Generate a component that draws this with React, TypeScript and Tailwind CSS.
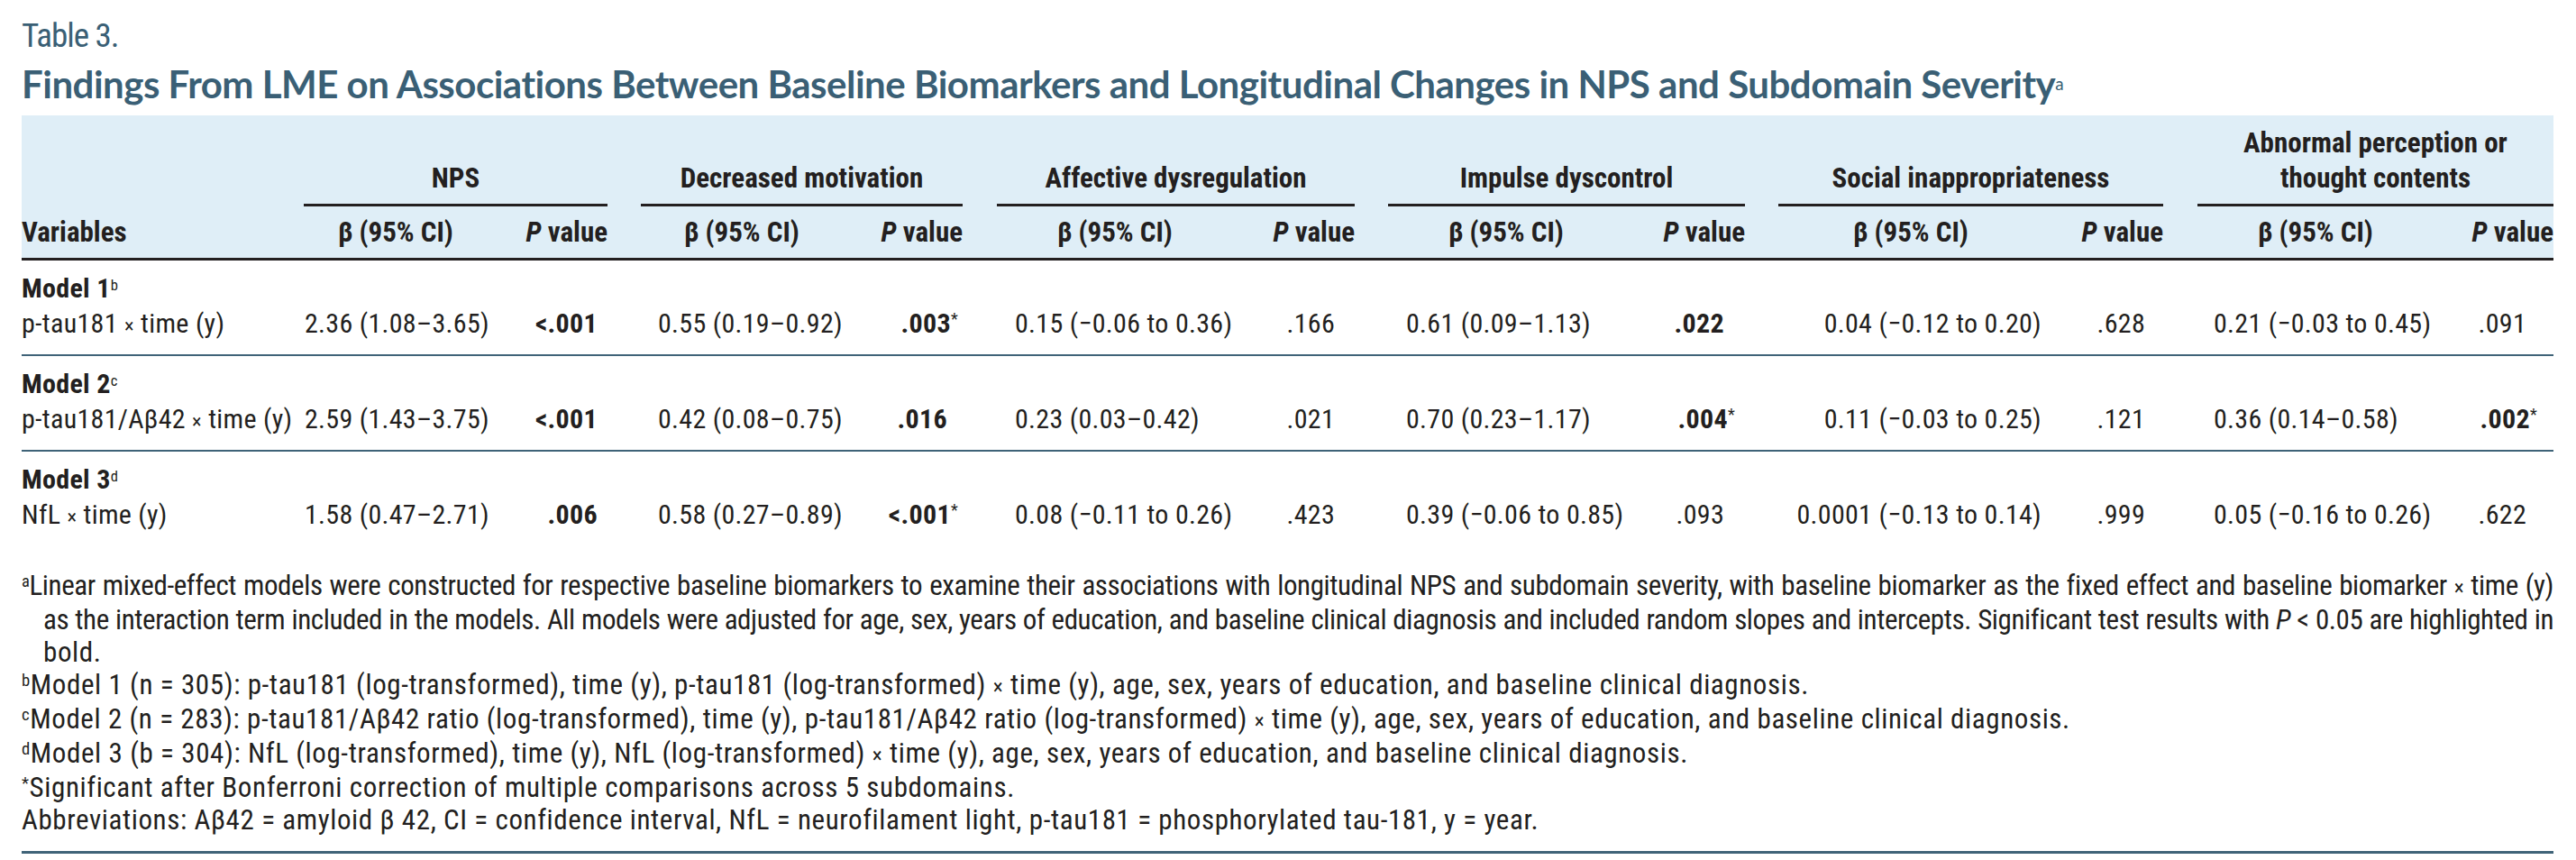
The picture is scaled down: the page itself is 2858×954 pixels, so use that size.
import React from "react";

const cond =
  "font-['Roboto_Condensed','Liberation_Sans_Narrow','DejaVu_Sans_Condensed','Noto_Sans',sans-serif] font-stretch-condensed";

type Group = {
  name: React.ReactNode;
  w: string;
  ml: string;
  bh: string;
  bd: string;
  pd: string;
};

const groups: Group[] = [
  { name: "NPS", w: "w-[337px]", ml: "", bh: "pl-[38px]", bd: "pl-[1px]", pd: "pr-[11px]" },
  { name: "Decreased motivation", w: "w-[357px]", ml: "ml-[37px]", bh: "pl-[48px]", bd: "pl-[19px]", pd: "pr-[17px]" },
  { name: "Affective dysregulation", w: "w-[397px]", ml: "ml-[38px]", bh: "pl-[67px]", bd: "pl-[20px]", pd: "pr-[22px]" },
  { name: "Impulse dyscontrol", w: "w-[396px]", ml: "ml-[37px]", bh: "pl-[67px]", bd: "pl-[20px]", pd: "pr-[23px]" },
  { name: "Social inappropriateness", w: "w-[427px]", ml: "ml-[37px]", bh: "pl-[83px]", bd: "text-right pr-[41px]", pd: "pr-[20px]" },
  {
    name: (
      <>
        Abnormal perception or
        <br />
        thought contents
      </>
    ),
    w: "w-[395px]",
    ml: "ml-[38px]",
    bh: "pl-[67px]",
    bd: "pl-[18px]",
    pd: "pr-[30px]",
  },
];

type Cell = { b: string; p: string; bold?: boolean; star?: boolean };

type Section = {
  model: string;
  sup: string;
  label: string;
  cells: Cell[];
};

const sections: Section[] = [
  {
    model: "Model 1",
    sup: "b",
    label: "p-tau181",
    cells: [
      { b: "2.36 (1.08–3.65)", p: "<.001", bold: true },
      { b: "0.55 (0.19–0.92)", p: ".003", bold: true, star: true },
      { b: "0.15 (−0.06 to 0.36)", p: ".166" },
      { b: "0.61 (0.09–1.13)", p: ".022", bold: true },
      { b: "0.04 (−0.12 to 0.20)", p: ".628" },
      { b: "0.21 (−0.03 to 0.45)", p: ".091" },
    ],
  },
  {
    model: "Model 2",
    sup: "c",
    label: "p-tau181/Aβ42",
    cells: [
      { b: "2.59 (1.43–3.75)", p: "<.001", bold: true },
      { b: "0.42 (0.08–0.75)", p: ".016", bold: true },
      { b: "0.23 (0.03–0.42)", p: ".021" },
      { b: "0.70 (0.23–1.17)", p: ".004", bold: true, star: true },
      { b: "0.11 (−0.03 to 0.25)", p: ".121" },
      { b: "0.36 (0.14–0.58)", p: ".002", bold: true, star: true },
    ],
  },
  {
    model: "Model 3",
    sup: "d",
    label: "NfL",
    cells: [
      { b: "1.58 (0.47–2.71)", p: ".006", bold: true },
      { b: "0.58 (0.27–0.89)", p: "<.001", bold: true, star: true },
      { b: "0.08 (−0.11 to 0.26)", p: ".423" },
      { b: "0.39 (−0.06 to 0.85)", p: ".093" },
      { b: "0.0001 (−0.13 to 0.14)", p: ".999" },
      { b: "0.05 (−0.16 to 0.26)", p: ".622" },
    ],
  },
];

function Times() {
  return <span className="text-[0.75em]">×</span>;
}

function Header() {
  return (
    <div className="flex h-[161px] bg-[#dfeef7] border-b-[3px] border-[#231f20] text-[31px] leading-[39px] font-bold">
      <div className="w-[313px] shrink-0 flex items-end pb-[9px]">Variables</div>
      {groups.map((g, i) => (
        <div key={i} className={`${g.w} ${g.ml} shrink-0 flex flex-col`}>
          <div className="h-[101px] shrink-0 border-b-[3px] border-[#231f20] flex items-end justify-center text-center pb-[9px]">
            <div>{g.name}</div>
          </div>
          <div className="flex flex-1 items-end pb-[9px] whitespace-nowrap">
            <div className={`flex-1 ${g.bh}`}>β (95% CI)</div>
            <div className="w-[94px] shrink-0 text-right">
              <i>P</i> value
            </div>
          </div>
        </div>
      ))}
    </div>
  );
}

function Body() {
  return (
    <div className="text-[30px] leading-[39px] tracking-[0.3px]">
      {sections.map((s, si) => (
        <div
          key={si}
          className={
            si < sections.length - 1
              ? "pt-[11px] pb-[12px] border-b-2 border-[#3f6378]"
              : "pt-[11px]"
          }
        >
          <div className="font-bold">
            {s.model}
            <sup className="text-[0.55em] font-normal">{s.sup}</sup>
          </div>
          <div className="flex whitespace-nowrap">
            <div className="w-[313px] shrink-0">
              {s.label} <Times /> time (y)
            </div>
            {groups.map((g, gi) => {
              const c = s.cells[gi];
              return (
                <div key={gi} className={`${g.w} ${g.ml} shrink-0 flex`}>
                  <div className={`flex-1 ${g.bd}`}>{c.b}</div>
                  <div className={`w-[94px] shrink-0 text-right ${g.pd}`}>
                    <span className={c.bold ? "font-bold" : ""}>{c.p}</span>
                    {c.star && <sup className="text-[0.6em] mr-[-12px]">*</sup>}
                  </div>
                </div>
              );
            })}
          </div>
        </div>
      ))}
    </div>
  );
}

function Footnotes() {
  const justify = "text-justify [text-align-last:justify] whitespace-nowrap tracking-[-0.4px]";
  return (
    <div className="mt-[39px] pb-[16px] border-b-[3px] border-[#3f6378] text-[31px] leading-[36px] tracking-[0.6px]">
      <div className={justify}>
        <sup className="text-[0.6em]">a</sup>Linear mixed-effect models were constructed for respective baseline biomarkers to
        examine their associations with longitudinal NPS and subdomain severity, with baseline biomarker as the fixed
        effect and baseline biomarker <Times /> time (y)
      </div>
      <div className={`pl-[24px] ${justify}`}>
        as the interaction term included in the models. All models were adjusted for age, sex, years of education, and
        baseline clinical diagnosis and included random slopes and intercepts. Significant test results with <i>P</i>
        {" < "}0.05 are highlighted in
      </div>
      <div className="pl-[24px]">bold.</div>
      <div className="whitespace-nowrap">
        <sup className="text-[0.6em]">b</sup>Model 1 (n = 305): p-tau181 (log-transformed), time (y), p-tau181
        (log-transformed) <Times /> time (y), age, sex, years of education, and baseline clinical diagnosis.
      </div>
      <div className="whitespace-nowrap">
        <sup className="text-[0.6em]">c</sup>Model 2 (n = 283): p-tau181/Aβ42 ratio (log-transformed), time (y),
        p-tau181/Aβ42 ratio (log-transformed) <Times /> time (y), age, sex, years of education, and baseline clinical
        diagnosis.
      </div>
      <div className="whitespace-nowrap">
        <sup className="text-[0.6em]">d</sup>Model 3 (b = 304): NfL (log-transformed), time (y), NfL (log-transformed){" "}
        <Times /> time (y), age, sex, years of education, and baseline clinical diagnosis.
      </div>
      <div className="whitespace-nowrap">
        <sup className="text-[0.6em]">*</sup>Significant after Bonferroni correction of multiple comparisons across 5
        subdomains.
      </div>
      <div className="whitespace-nowrap">
        Abbreviations: Aβ42 = amyloid β 42, CI = confidence interval, NfL = neurofilament light, p-tau181 =
        phosphorylated tau-181, y = year.
      </div>
    </div>
  );
}

export default function App() {
  return (
    <div className="w-[2858px] h-[954px] bg-white overflow-hidden pl-[24px] pr-[25px] text-[#231f20]">
      <div className={`${cond} text-[37px] leading-[40px] pt-[20px] tracking-[-1px] text-[#3a5f75]`}>Table 3.</div>
      <div className="font-['Lato',sans-serif] font-bold text-[42px] leading-[52px] mt-[7px] tracking-[-0.5px] text-[#3a5f75] whitespace-nowrap">
        Findings From LME on Associations Between Baseline Biomarkers and Longitudinal Changes in NPS and Subdomain
        Severity<sup className="text-[0.45em] font-normal">a</sup>
      </div>
      <div className={`${cond} mt-[9px]`}>
        <Header />
        <Body />
        <Footnotes />
      </div>
    </div>
  );
}
